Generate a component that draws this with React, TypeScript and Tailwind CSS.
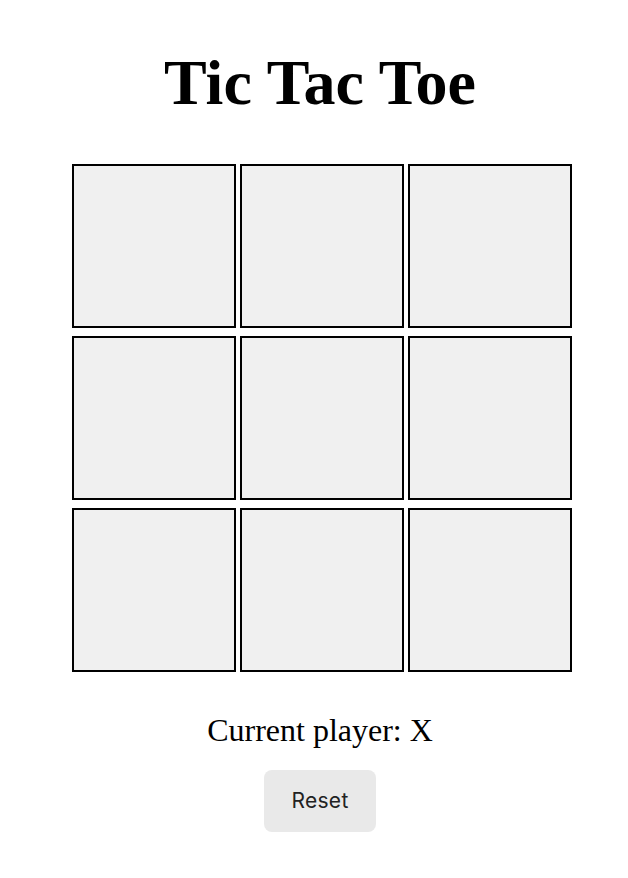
import React, { useState } from 'react';

const App: React.FC = () => {
  const [board, setBoard] = useState<(string | null)[]>(Array(9).fill(null));
  const [player, setPlayer] = useState<'X' | 'O'>('X');

  const play = (i: number) => {
    if (board[i]) return;
    const next = [...board];
    next[i] = player;
    setBoard(next);
    setPlayer(player === 'X' ? 'O' : 'X');
  };

  const reset = () => {
    setBoard(Array(9).fill(null));
    setPlayer('X');
  };

  return (
    <div className="min-h-screen bg-white flex flex-col items-center pt-[46px] pl-[12px] font-['Liberation_Serif',serif] text-black">
      {/* Title */}
      <h1 className="text-[64px] leading-[74px] font-bold">Tic Tac Toe</h1>

      {/* Board */}
      <div className="mt-[44px] ml-[4px] grid grid-cols-[repeat(3,164px)] gap-x-[4px] gap-y-[8px]">
        {board.map((cell, i) => (
          <button
            key={i}
            onClick={() => play(i)}
            className="w-[164px] h-[164px] bg-[#f0f0f0] border-2 border-black text-[64px] font-bold"
          >
            {cell}
          </button>
        ))}
      </div>

      <p className="mt-[40px] text-[32px] leading-[36px]">Current player: {player}</p>

      <button
        onClick={reset}
        className="mt-[22px] w-[112px] h-[62px] rounded-lg bg-[#e9e9e9] text-[#222] text-[21px] tracking-[0.3px] font-['Inter',sans-serif]"
      >
        Reset
      </button>
    </div>
  );
};

export default App;
